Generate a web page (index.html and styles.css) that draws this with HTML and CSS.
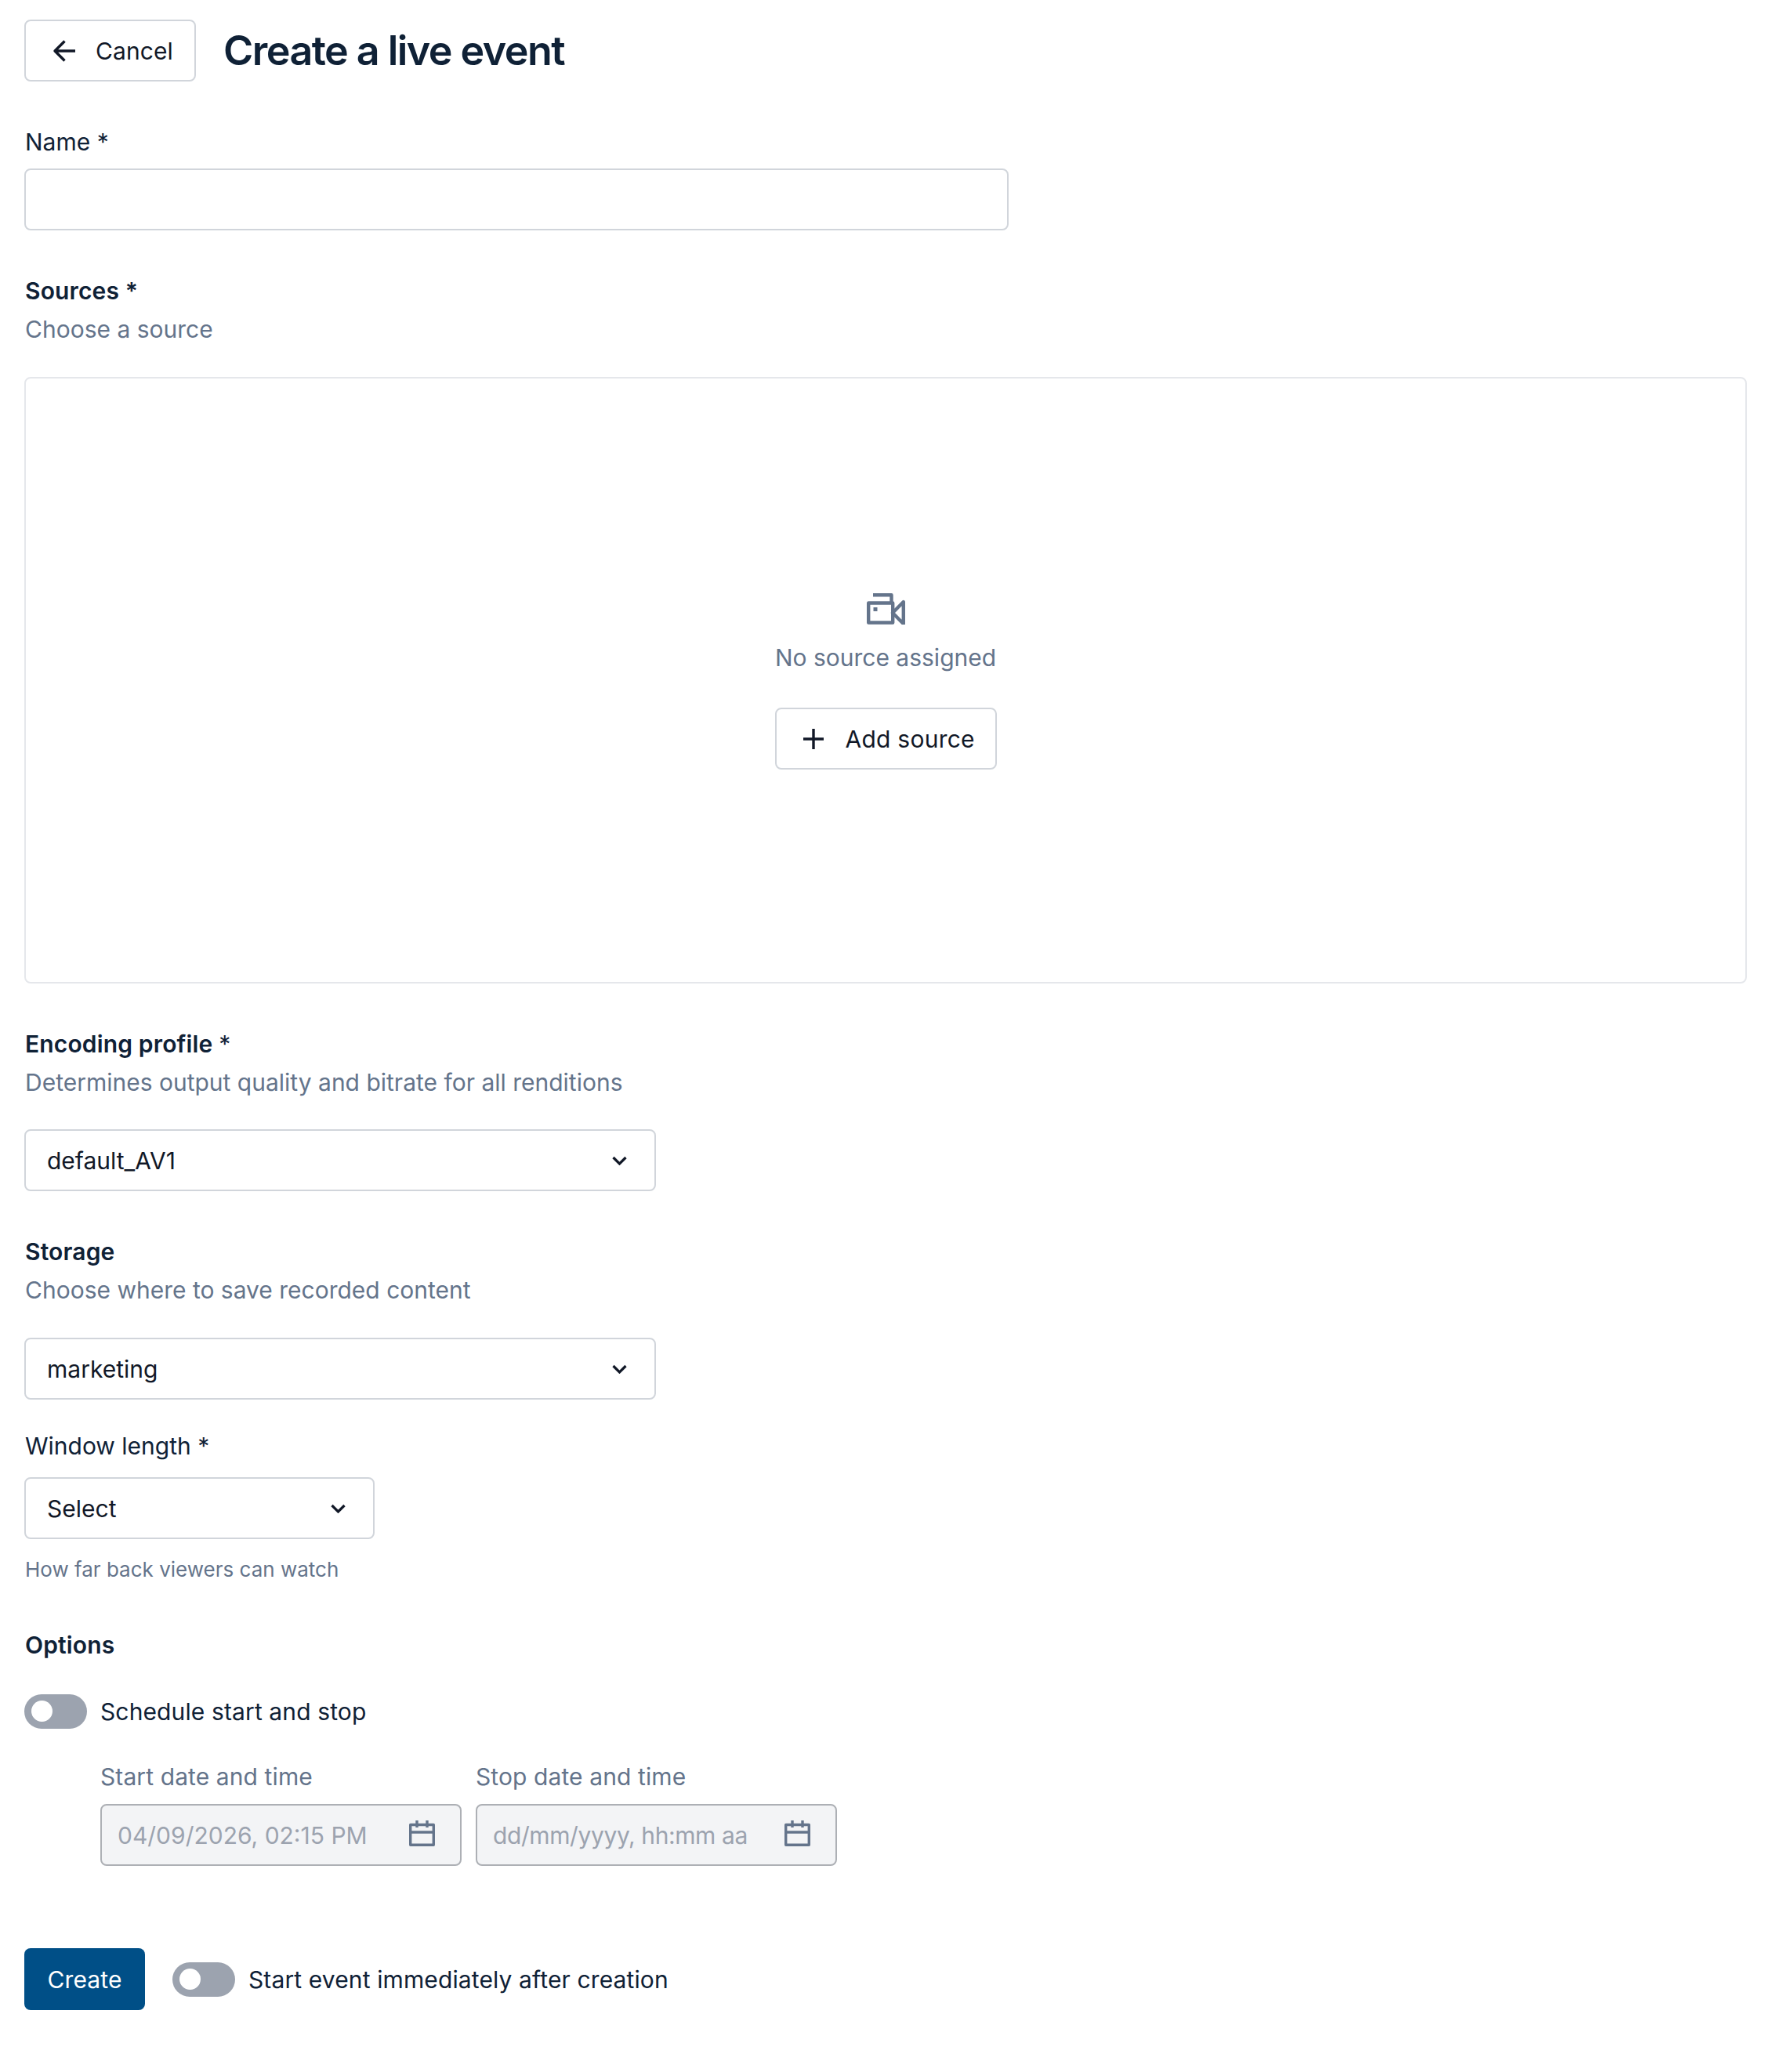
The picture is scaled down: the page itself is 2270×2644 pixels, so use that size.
FILE: index.html
```html
<!DOCTYPE html>
<html lang="en">
<head>
<meta charset="utf-8">
<title>Create a live event</title>
<link rel="stylesheet" href="styles.css">
</head>
<body>
<main class="page">
  <header class="head">
    <button class="btn back" type="button">
      <svg class="ico-30" viewBox="0 0 30 30" fill="none" stroke="currentColor" stroke-width="3.4" stroke-linejoin="round"><path d="M29 15H3M15.5 2.5 3 15l12.5 12.5"/></svg>
      <span>Cancel</span>
    </button>
    <h1 class="title">Create a live event</h1>
  </header>

  <section class="f-name">
    <label class="label">Name *</label>
    <div class="input name-input"></div>
  </section>

  <section class="f-sources">
    <div class="label strong">Sources *</div>
    <div class="hint">Choose a source</div>
    <div class="empty">
      <svg class="cam" viewBox="0 0 49 40" fill="none" stroke="#64748b" stroke-width="4.4" stroke-linejoin="round"><path d="M2.2 12.5h31v25h-31z"/><path d="M8 2.2h23.5v10.3" /><path d="M33 25 46.8 11v28z" /><path d="M8.5 18h5v5h-5z" fill="#64748b" stroke="none"/></svg>
      <div class="empty-text">No source assigned</div>
      <button class="btn add" type="button">
        <svg class="ico-26" viewBox="0 0 26 26" fill="none" stroke="currentColor" stroke-width="3.4"><path d="M13 0v26M0 13h26"/></svg>
        <span>Add source</span>
      </button>
    </div>
  </section>

  <section class="f-encoding">
    <div class="label strong">Encoding profile <span class="plain">*</span></div>
    <div class="hint">Determines output quality and bitrate for all renditions</div>
    <div class="input select wide"><span>default_AV1</span><svg class="chev" viewBox="0 0 19 12" fill="none" stroke="currentColor" stroke-width="3.2"><path d="m1.5 2 8 8 8-8"/></svg></div>
  </section>

  <section class="f-storage">
    <div class="label strong">Storage</div>
    <div class="hint">Choose where to save recorded content</div>
    <div class="input select wide"><span>marketing</span><svg class="chev" viewBox="0 0 19 12" fill="none" stroke="currentColor" stroke-width="3.2"><path d="m1.5 2 8 8 8-8"/></svg></div>
  </section>

  <section class="f-window">
    <div class="label">Window length *</div>
    <div class="input select narrow"><span>Select</span><svg class="chev" viewBox="0 0 19 12" fill="none" stroke="currentColor" stroke-width="3.2"><path d="m1.5 2 8 8 8-8"/></svg></div>
    <div class="small">How far back viewers can watch</div>
  </section>

  <section class="f-options">
    <div class="label strong">Options</div>
    <div class="toggle-row schedule">
      <span class="toggle"><span class="thumb"></span></span>
      <span class="opt-text">Schedule start and stop</span>
    </div>
    <div class="dates">
      <div class="date-field">
        <div class="date-label">Start date and time</div>
        <div class="date-input"><span>04/09/2026, 02:15 PM</span><svg class="cal" viewBox="0 0 33 33" fill="none" stroke="#64748b" stroke-width="3.4" stroke-linejoin="round"><path d="M1.7 5.5h29.6v25.8H1.7zM1.7 15h29.6M10 0v9M23 0v9"/></svg></div>
      </div>
      <div class="date-field">
        <div class="date-label">Stop date and time</div>
        <div class="date-input"><span class="ph">dd/mm/yyyy, hh:mm aa</span><svg class="cal" viewBox="0 0 33 33" fill="none" stroke="#64748b" stroke-width="3.4" stroke-linejoin="round"><path d="M1.7 5.5h29.6v25.8H1.7zM1.7 15h29.6M10 0v9M23 0v9"/></svg></div>
      </div>
    </div>
  </section>

  <footer class="foot">
    <button class="create" type="button">Create</button>
    <div class="toggle-row">
      <span class="toggle"><span class="thumb"></span></span>
      <span class="opt-text">Start event immediately after creation</span>
    </div>
  </footer>
</main>
</body>
</html>
```

FILE: styles.css
```css
* { box-sizing: border-box; }
html, body { margin: 0; background: #fff; }
body { font-family: Inter, "Liberation Sans", sans-serif; font-size: 30px; color: #111827; }
.page { padding: 25px 41px 79px 31px; }
.head { display: flex; align-items: center; gap: 35px; height: 79px; }
.btn { display: inline-flex; align-items: center; height: 79px; background: #fff; border: 2px solid #d1d5db; border-radius: 8px; font: inherit; color: #111827; padding: 0; }
.back { width: 219px; padding-left: 34px; gap: 25px; }
.back span { letter-spacing: 0.1px; }
.ico-30 { width: 30px; height: 30px; flex: none; }
.title { margin: 0; font-size: 52px; line-height: 78px; font-weight: 600; color: #0f2136; letter-spacing: -1.55px; }
.label { display: block; margin-left: 1px; line-height: 40px; color: #0f2136; }
.strong { font-weight: 600; letter-spacing: 0.15px; }
.plain { font-weight: 400; }
.hint { margin: 9px 0 0 1px; line-height: 40px; color: #64748b; }
.input { height: 79px; background: #fff; border: 2px solid #d1d5db; border-radius: 8px; }
.f-name { margin-top: 57px; }
.name-input { margin-top: 14px; width: 1256px; }
.f-sources { margin-top: 57px; }
.empty { margin-top: 41px; height: 774px; padding-top: 3px; border: 2px solid #e5e7eb; border-radius: 8px; display: flex; flex-direction: column; align-items: center; justify-content: center; }
.cam { width: 49px; height: 40px; flex: none; }
.empty-text { margin-top: 22px; line-height: 40px; color: #64748b; }
.add { margin-top: 44px; width: 283px; padding-left: 34px; gap: 28px; }
.add span { letter-spacing: 0.25px; }
.ico-26 { width: 26px; height: 26px; flex: none; }
.f-encoding { margin-top: 57px; }
.f-storage { margin-top: 57px; }
.f-encoding .input { margin-top: 40px; }
.f-storage .input { margin-top: 41px; }
.select { display: flex; align-items: center; justify-content: space-between; padding: 0 35px 0 27px; }
.wide { width: 806px; }
.narrow { width: 447px; margin-top: 20px; }
.chev { width: 19px; height: 12px; flex: none; }
.f-window { margin-top: 39px; }
.small { margin: 19px 0 0 1px; font-size: 26px; line-height: 40px; color: #64748b; }
.f-options { margin-top: 56px; }
.toggle-row { display: flex; align-items: center; gap: 17px; }
.schedule { margin-top: 43px; }
.toggle { display: block; width: 80px; height: 44px; border-radius: 22px; background: #9ca3af; padding: 8px 9px; flex: none; }
.thumb { display: block; width: 27px; height: 27px; border-radius: 50%; background: #fff; }
.opt-text { line-height: 44px; color: #0f2136; letter-spacing: 0.12px; }
.dates { display: flex; gap: 18px; margin: 41px 0 0 97px; }
.date-field { width: 461px; }
.date-label { line-height: 40px; color: #64748b; letter-spacing: 0.1px; }
.date-input { margin-top: 15px; height: 79px; background: #f3f4f6; border: 2px solid #adb0b5; border-radius: 8px; display: flex; align-items: center; justify-content: space-between; padding: 0 32px 0 20px; color: #9ca3af; }
.ph { letter-spacing: -0.4px; }
.cal { width: 33px; height: 33px; flex: none; margin-bottom: 4px; }
.foot { display: flex; align-items: center; gap: 35px; margin-top: 105px; }
.create { width: 154px; height: 79px; border: 0; border-radius: 8px; background: #004f87; color: #fff; font: inherit; padding: 0; letter-spacing: 0.1px; }
```
